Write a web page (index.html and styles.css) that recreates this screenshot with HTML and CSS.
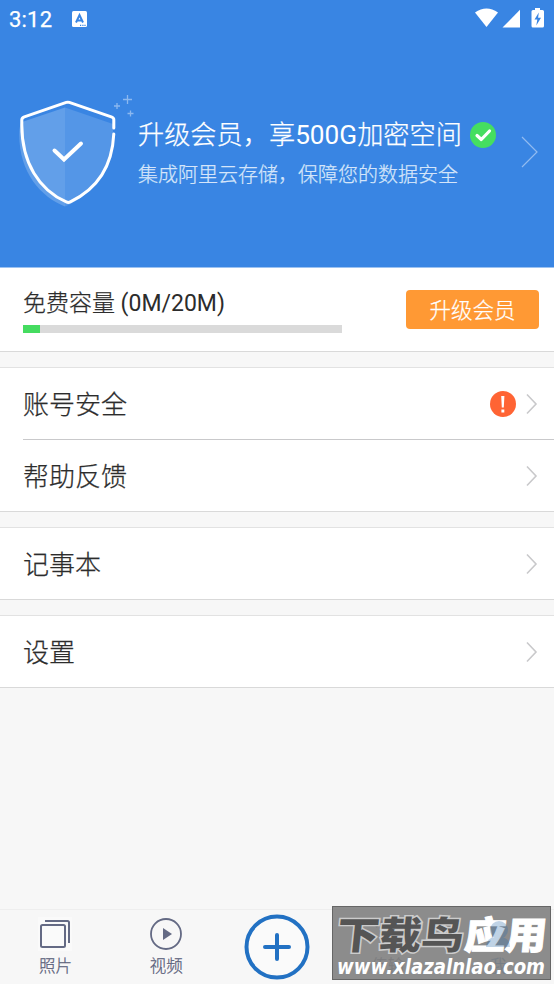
FILE: index.html
```html
<!DOCTYPE html>
<html lang="zh-CN">
<head>
<meta charset="UTF-8">
<title>我</title>
<link rel="stylesheet" href="styles.css">
</head>
<body>
<div class="app">
  <header class="hero">
    <div class="status">
      <span class="time">3:12</span>
      <svg class="notice" width="15" height="17" viewBox="0 0 15 17"><rect width="15" height="16" rx="1.500" fill="#fff"/><path d="M4 11.500 7.500 4 11 11.500M5.500 9.500h4" fill="none" stroke="#3985e3" stroke-width="2"/><path d="M8 14.300h1.200M10.300 14.300h1.200M12.400 14.300h1.200" stroke="#3985e3" stroke-width="1.200"/></svg>
      <svg class="signals" width="72" height="22" viewBox="0 0 72 22"><path d="M1 4.400Q12.500-3.400 24 4.400L12.500 19Z" fill="#fff"/><path d="M28.500 19.500 46 1.800v17.700Z" fill="#fff"/><path d="M61 0h5v2h2.500q1.500 0 1.500 1.500v14.500q0 1.500-1.500 1.500h-9.500q-1.500 0-1.500-1.500V3.500Q57.500 2 59 2h2Z" fill="#fff"/><path d="m64.800 4.500-4.300 7h2.800l-1 6 4.700-7.700h-2.900Z" fill="#3985e3"/></svg>
    </div>
    <div class="promo">
      <svg class="shield" width="122" height="120" viewBox="0 0 122 120">
        <path d="M55 17.500 12 32Q9.300 34 9.300 45C9.300 83 31 107 55 116.500Z" fill="#629fe9"/>
        <path d="M55 17.500 103 34V47C102 80 82 105 55 116.500Z" fill="#5496e7"/>
        <path transform="translate(-1.700 .9)" d="M105.500 37V28.500Q105.500 27 103 26L61 11.500Q59.500 11 58 11.500L16 26Q13.500 27 13.500 29V34C13.500 72 31 99 58 111Q60 112 62 111C89 98 104 75 105.500 43" fill="none" stroke="#fff" stroke-width="3" stroke-linecap="round" stroke-linejoin="round"/>
        <path d="m44.500 60.500 9.500 9 17-16" fill="none" stroke="#fff" stroke-width="4" stroke-linecap="round"/>
        <path d="M117.500 5v9M113 9.500h9M107 13v6M104 16h6M120.500 20.500v6M117.500 23.500h6" stroke="#8cb8ef" stroke-width="1.300"/>
      </svg>
      <div class="promo-text">
        <div class="promo-title"><span>升级会员，享<span class="latin">500G</span>加密空间</span>
          <svg width="26" height="26" viewBox="0 0 26 26"><circle cx="13" cy="13" r="13" fill="#45de60"/><path d="m7 13.500 4.300 4L19.500 9" fill="none" stroke="#fff" stroke-width="3.200" stroke-linecap="round" stroke-linejoin="round"/></svg>
        </div>
        <div class="promo-sub">集成阿里云存储，保障您的数据安全</div>
      </div>
      <svg class="promo-arrow" width="18" height="32" viewBox="0 0 18 32"><path d="m1 1 15 15L1 31" fill="none" stroke="#92bbf0" stroke-width="1.200"/></svg>
    </div>
  </header>

  <section class="capacity">
    <div class="quota"><div class="quota-label">免费容量 <span class="latin">(0M/20M)</span></div><div class="track"><div class="used"></div></div></div>
    <div class="upgrade">升级会员</div>
  </section>

  <section class="group">
    <div class="row"><span>账号安全</span>
      <svg class="alert" width="26" height="26" viewBox="0 0 26 26"><circle cx="13" cy="13" r="13" fill="#ff6434"/><path d="M11.200 5h3.200l-.6 11.500h-2ZM11.400 18.500h2.900v3h-2.900Z" fill="#fff"/></svg>
      <svg class="arrow" width="12" height="22" viewBox="0 0 12 22"><path d="m1 1.500 9 9.500-9 9.500" fill="none" stroke="#c9c9cb" stroke-width="1.600"/></svg></div>
    <div class="row inset"><span>帮助反馈</span><svg class="arrow" width="12" height="22" viewBox="0 0 12 22"><path d="m1 1.500 9 9.500-9 9.500" fill="none" stroke="#c9c9cb" stroke-width="1.600"/></svg></div>
  </section>
  <section class="group">
    <div class="row"><span>记事本</span><svg class="arrow" width="12" height="22" viewBox="0 0 12 22"><path d="m1 1.500 9 9.500-9 9.500" fill="none" stroke="#c9c9cb" stroke-width="1.600"/></svg></div>
  </section>
  <section class="group">
    <div class="row"><span>设置</span><svg class="arrow" width="12" height="22" viewBox="0 0 12 22"><path d="m1 1.500 9 9.500-9 9.500" fill="none" stroke="#c9c9cb" stroke-width="1.600"/></svg></div>
  </section>

  <nav class="tabs">
    <div class="tab"><svg width="34" height="34" viewBox="0 0 34 34"><rect width="34" height="34" fill="#fafafa"/><rect x="3" y="8" width="24" height="22" rx="1.500" fill="none" stroke="#646a84" stroke-width="2"/><path d="M7 4h22.500q1.500 0 1.500 1.500V26" fill="none" stroke="#646a84" stroke-width="2"/></svg><span>照片</span></div>
    <div class="tab"><svg width="34" height="34" viewBox="0 0 34 34"><circle cx="17" cy="17" r="15" fill="none" stroke="#646a84" stroke-width="1.800"/><path d="M14 11v12l9-6Z" fill="#646a84"/></svg><span>视频</span></div>
    <div class="tab add"><svg width="66" height="66" viewBox="0 0 66 66"><circle cx="33" cy="33" r="30.500" fill="#fafafa" stroke="#2271c3" stroke-width="4"/><path d="M33 21v24M21 33h24" stroke="#2271c3" stroke-width="4" stroke-linecap="round"/></svg></div>
    <div class="tab"><svg width="34" height="34" viewBox="0 0 34 34"><path d="M11 4v26M5 10l6-6M23 30V4M29 24l-6 6" fill="none" stroke="#646a84" stroke-width="2"/></svg><span>传输</span></div>
    <div class="tab"><svg width="34" height="34" viewBox="0 0 34 34"></svg><span class="active">我</span></div>
  </nav>
  <svg class="watermark" width="220" height="75" viewBox="0 0 220 75">
    <rect x=".5" y=".5" width="218" height="73" fill="#808080" fill-opacity=".9" stroke="#666"/>
    <g class="brand" transform="translate(5 0) skewX(-6)"><text class="dark" x="3" y="43" textLength="127" lengthAdjust="spacingAndGlyphs">下载鸟</text><text class="light" x="131" y="43" textLength="82" lengthAdjust="spacingAndGlyphs">应用</text></g>
    <g fill="#2f6fb0" opacity=".3"><circle cx="167" cy="24" r="9"/><path d="M154 41q0-9 9-10h6q9 1 9 10Z"/></g>
    <text class="site" x="5" y="68" textLength="208" lengthAdjust="spacingAndGlyphs">www.xlazalnlao.com</text>
  </svg>
</div>
</body>
</html>
```
FILE: styles.css
```css
* { box-sizing: border-box; }
body { margin: 0; font-family: Roboto, "Noto Sans CJK SC Light", "Noto Sans CJK SC", sans-serif; font-weight: 300; -webkit-text-stroke: .25px currentColor; }
svg { display: block; flex: none; }
.latin { font-weight: 400; -webkit-text-stroke: 0; }
.app { position: relative; width: 554px; height: 984px; overflow: hidden; display: flex; flex-direction: column; background: #f7f7f7; color: #2c2c2c; }
.hero { height: 267px; flex: none; background: #3985e3; color: #fff; }
.status { height: 38px; display: flex; align-items: center; padding: 0 8px 0 9px; }
.time { font-size: 22px; line-height: 38px; padding-top: 2px; width: 63px; font-weight: 400; letter-spacing: .2px; }
.signals { margin-left: auto; }
.promo { display: flex; height: 229px; padding: 52px 15px 0 10px; }
.shield { overflow: visible; }
.promo-text { margin-left: 6px; padding-top: 25px; white-space: nowrap; }
.promo-title { display: flex; align-items: center; gap: 8px; height: 40px; line-height: 40px; font-size: 26.200px; }
.promo-sub { height: 38px; line-height: 40px; font-size: 20px; color: #d5e5fa; }
.promo-arrow { margin: 46px 0 0 auto; }
.capacity { height: 85px; flex: none; display: flex; justify-content: space-between; padding: 0 15px 0 23px; border-bottom: 1px solid #d9d9d9; border-top: 1px solid #9cc2f1; background: #fff; }
.quota { width: 319px; padding-top: 17px; }
.quota-label { height: 40px; line-height: 37px; font-size: 23px; }
.track { height: 8px; background: #dadada; }
.used { width: 16.500px; height: 8px; background: #45dc60; }
.upgrade { width: 133px; height: 39px; margin-top: 22px; border-radius: 4px; background: #ff9934; color: #fff; text-align: center; line-height: 41px; font-size: 21.500px; }
.group { flex: none; margin-top: 15px; border-top: 1px solid #e2e2e2; border-bottom: 1px solid #d9d9d9; background: #fff; }
.row { height: 71px; display: flex; align-items: center; padding: 0 16px 0 23px; font-size: 26px; }
.row span { flex: 1; padding-bottom: 2px; }
.alert { margin-right: 10px; }
.inset { margin-left: 23px; padding-left: 0; height: 72px; border-top: 1px solid #c9c9cb; }
.tabs { height: 75px; margin-top: auto; flex: none; display: grid; grid-template-columns: repeat(5, 1fr); border-top: 1px solid #eee; color: #5a607a; font-size: 16.500px; }
.tab { display: flex; flex-direction: column; align-items: center; padding-top: 7px; line-height: 32px; }
.add { padding-top: 4px; }
.active { color: #2271c3; }
.watermark { position: absolute; left: 332px; top: 906px; -webkit-text-stroke: initial; }
.brand { font-family: "Noto Sans CJK SC", sans-serif; font-size: 38px; font-weight: 900; paint-order: stroke; }
.dark { fill: #555; stroke: #ccc; stroke-width: 3px; }
.light { fill: #fff; stroke: #fff; stroke-width: 1px; }
.site { fill: #fff; font: italic 700 21px "DejaVu Sans", sans-serif; }
```
